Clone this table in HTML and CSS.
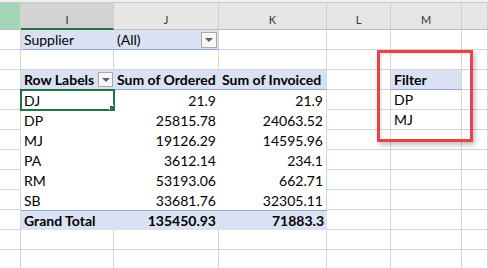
FILE: index.html
```html
<!DOCTYPE html>
<html lang="en">
<head>
  <meta charset="UTF-8" />
  <title>Pivot Table</title>
  <link rel="stylesheet" href="styles.css">
</head>
<body>
  <div class="sheet">
    <div class="topbar"></div>

    <!-- column letters -->
    <div class="row heads">
      <div class="h col-h green"></div>
      <div class="h col-i active">I</div>
      <div class="h col-j">J</div>
      <div class="h col-k">K</div>
      <div class="h col-l">L</div>
      <div class="h col-m">M</div>
      <div class="h col-n"></div>
    </div>

    <!-- report filter -->
    <div class="row">
      <div class="c col-h"></div>
      <div class="c col-i pf">Supplier</div>
      <div class="c col-j pf pf-last">(All)<span class="dd"></span></div>
      <div class="c col-k"></div>
      <div class="c col-l"></div>
      <div class="c col-m"></div>
      <div class="c col-n"></div>
    </div>

    <div class="row">
      <div class="c col-h"></div>
      <div class="c col-i"></div>
      <div class="c col-j"></div>
      <div class="c col-k"></div>
      <div class="c col-l"></div>
      <div class="c col-m"></div>
      <div class="c col-n"></div>
    </div>

    <!-- pivot header -->
    <div class="row">
      <div class="c col-h"></div>
      <div class="c col-i ph ph-first">Row Labels<span class="dd small"></span></div>
      <div class="c col-j ph">Sum of Ordered</div>
      <div class="c col-k ph">Sum of Invoiced</div>
      <div class="c col-l"></div>
      <div class="c col-m ph">Filter</div>
      <div class="c col-n"></div>
    </div>

    <div class="row">
      <div class="c col-h"></div>
      <div class="c col-i pd sel">DJ</div>
      <div class="c col-j pd num">21.9</div>
      <div class="c col-k pd num">21.9</div>
      <div class="c col-l"></div>
      <div class="c col-m">DP</div>
      <div class="c col-n"></div>
    </div>

    <div class="row">
      <div class="c col-h"></div>
      <div class="c col-i pd">DP</div>
      <div class="c col-j pd num">25815.78</div>
      <div class="c col-k pd num">24063.52</div>
      <div class="c col-l"></div>
      <div class="c col-m">MJ</div>
      <div class="c col-n"></div>
    </div>

    <div class="row">
      <div class="c col-h"></div>
      <div class="c col-i pd">MJ</div>
      <div class="c col-j pd num">19126.29</div>
      <div class="c col-k pd num">14595.96</div>
      <div class="c col-l"></div>
      <div class="c col-m"></div>
      <div class="c col-n"></div>
    </div>

    <div class="row">
      <div class="c col-h"></div>
      <div class="c col-i pd">PA</div>
      <div class="c col-j pd num">3612.14</div>
      <div class="c col-k pd num">234.1</div>
      <div class="c col-l"></div>
      <div class="c col-m"></div>
      <div class="c col-n"></div>
    </div>

    <div class="row">
      <div class="c col-h"></div>
      <div class="c col-i pd">RM</div>
      <div class="c col-j pd num">53193.06</div>
      <div class="c col-k pd num">662.71</div>
      <div class="c col-l"></div>
      <div class="c col-m"></div>
      <div class="c col-n"></div>
    </div>

    <div class="row">
      <div class="c col-h"></div>
      <div class="c col-i pd">SB</div>
      <div class="c col-j pd num">33681.76</div>
      <div class="c col-k pd num">32305.11</div>
      <div class="c col-l"></div>
      <div class="c col-m"></div>
      <div class="c col-n"></div>
    </div>

    <!-- grand total -->
    <div class="row">
      <div class="c col-h"></div>
      <div class="c col-i gt">Grand Total</div>
      <div class="c col-j gt num">135450.93</div>
      <div class="c col-k gt num">71883.3</div>
      <div class="c col-l"></div>
      <div class="c col-m"></div>
      <div class="c col-n"></div>
    </div>

    <div class="row">
      <div class="c col-h"></div>
      <div class="c col-i"></div>
      <div class="c col-j"></div>
      <div class="c col-k"></div>
      <div class="c col-l"></div>
      <div class="c col-m"></div>
      <div class="c col-n"></div>
    </div>

    <div class="row">
      <div class="c col-h"></div>
      <div class="c col-i"></div>
      <div class="c col-j"></div>
      <div class="c col-k"></div>
      <div class="c col-l"></div>
      <div class="c col-m"></div>
      <div class="c col-n"></div>
    </div>

    <!-- red highlight round the filter list -->
    <div class="callout"></div>
  </div>
</body>
</html>
```

FILE: styles.css
```css
* {
  box-sizing: border-box;
  margin: 0;
  padding: 0;
}

body {
  background: white;
  font-family: 'Lato', 'Liberation Sans', sans-serif;
  font-size: 14px;
  color: #000;
  overflow: hidden;
}

.sheet {
  position: relative;
  width: 488px;
  height: 268px;
  overflow: hidden;
}

.topbar {
  height: 3px;
  background: #f0f0f0;
  border-bottom: 1px solid #c8c8c8;
}

.row {
  display: flex;
  height: 20px;
}

.row.heads {
  height: 27px;
}

.col-h { width: 21px; }
.col-i { width: 93px; }
.col-j { width: 105px; }
.col-k { width: 108px; }
.col-l { width: 64px; }
.col-m { width: 71px; }
.col-n { width: 26px; }

/* column letters */
.h {
  height: 27px;
  padding-top: 7px;
  line-height: 19px;
  background: #e6e6e6;
  border-right: 1px solid #cfcfcf;
  border-bottom: 1px solid #bdbdbd;
  text-align: center;
  font-size: 11px;
  color: #333;
}

.h.green {
  background: #a2d6b7;
}

.h.active {
  background: #d3d3d3;
  border-bottom: 2px solid #217346;
}

/* plain cells */
.c {
  display: flex;
  align-items: center;
  height: 20px;
  padding: 0 3px;
  border-right: 1px solid #d4d4d4;
  border-bottom: 1px solid #d4d4d4;
  white-space: nowrap;
  overflow: hidden;
}

.num {
  justify-content: flex-end;
}

/* report filter */
.pf {
  background: #d9e1f2;
  border-right: none;
  border-bottom: 1px solid #8ea9db;
}

.pf-last {
  padding-right: 1px;
  border-right: 1px solid #d4d4d4;
}

/* pivot header, body and total */
.ph {
  background: #d9e1f2;
  font-weight: 700;
  border-right: none;
  border-bottom: 1px solid #8ea9db;
}

.ph-first {
  padding-right: 1px;
}

.pd {
  background: white;
  border-right: none;
  border-bottom: none;
}

.gt {
  background: #d9e1f2;
  font-weight: 700;
  border-right: none;
  border-bottom: none;
  border-top: 1px solid #8ea9db;
}

.col-k.ph,
.col-k.pd {
  border-right: 1px solid #d4d4d4;
}

.col-m.ph {
  border-right: 1px solid #d4d4d4;
}

/* drop-down buttons */
.dd {
  display: flex;
  justify-content: center;
  align-items: center;
  width: 16px;
  height: 16px;
  margin-left: auto;
  border: 1px solid #a9a9a9;
  background: #f7f7f7;
}

.dd::after {
  content: "";
  border-left: 4px solid transparent;
  border-right: 4px solid transparent;
  border-top: 4px solid #606060;
}

.dd.small {
  width: 15px;
  height: 15px;
}

/* selected cell */
.sel {
  position: relative;
  outline: 2px solid #217346;
  outline-offset: -1px;
}

.sel::after {
  content: "";
  position: absolute;
  right: -3px;
  bottom: -3px;
  width: 6px;
  height: 6px;
  background: #217346;
  border: 1px solid white;
}

.callout {
  position: absolute;
  left: 377px;
  top: 50px;
  width: 96px;
  height: 92px;
  border: 3px solid #ef4047;
  box-shadow: 2px 3px 5px rgba(0, 0, 0, 0.25), inset 1px 1px 3px rgba(0, 0, 0, 0.12);
}
```
